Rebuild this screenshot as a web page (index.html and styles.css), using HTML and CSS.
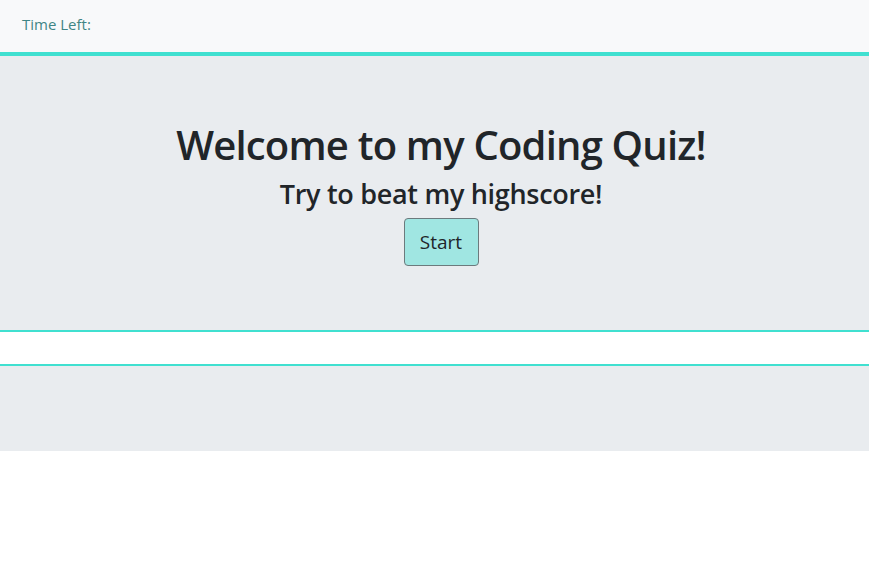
FILE: index.html
```html
<!DOCTYPE html>
<html lang="en">
<head>
<meta charset="utf-8">
<title>Coding Quiz</title>
<link rel="stylesheet" href="styles.css">
</head>
<body>
<nav class="navbar">
  <span class="timer">Time Left:</span>
</nav>
<main>
  <section class="jumbotron">
    <h1 class="title">Welcome to my Coding Quiz!</h1>
    <h3 class="subtitle">Try to beat my highscore!</h3>
    <button class="btn-start" type="button">Start</button>
  </section>
  <section class="results"></section>
</main>
</body>
</html>
```

FILE: styles.css
```css
* { box-sizing: border-box; }
html, body {
  margin: 0;
  padding: 0;
  background: #ffffff;
  font-family: "Open Sans", "Noto Sans", sans-serif;
  color: #212529;
}
.navbar {
  height: 56px;
  background: #f8f9fa;
  border-bottom: 4px solid #40e0d0;
  display: flex;
  align-items: center;
  padding: 0 22px 3px;
}
.timer {
  font-size: 15px;
  color: #3f8585;
  line-height: 1;
}
.jumbotron {
  background: #e9ecef;
  padding: 65px 26px 64px 39px;
  border-bottom: 2px solid #40e0d0;
  margin-bottom: 32px;
  display: flex;
  flex-direction: column;
  align-items: center;
  text-align: center;
}
.title {
  margin: 0 0 8px;
  font-size: 40px;
  font-weight: 600;
  line-height: 48px;
  letter-spacing: -0.8px;
}
.subtitle {
  margin: 0 0 8px;
  font-size: 27px;
  font-weight: 600;
  line-height: 33px;
  letter-spacing: -0.3px;
}
.btn-start {
  font-family: inherit;
  width: 75px;
  height: 48px;
  font-size: 19px;
  color: #212529;
  background: #a0e6e2;
  border: 1px solid #6c7a7d;
  border-radius: 4px;
  padding: 0;
}
.results {
  height: 87px;
  background: #e9ecef;
  border-top: 2px solid #40e0d0;
}
```
